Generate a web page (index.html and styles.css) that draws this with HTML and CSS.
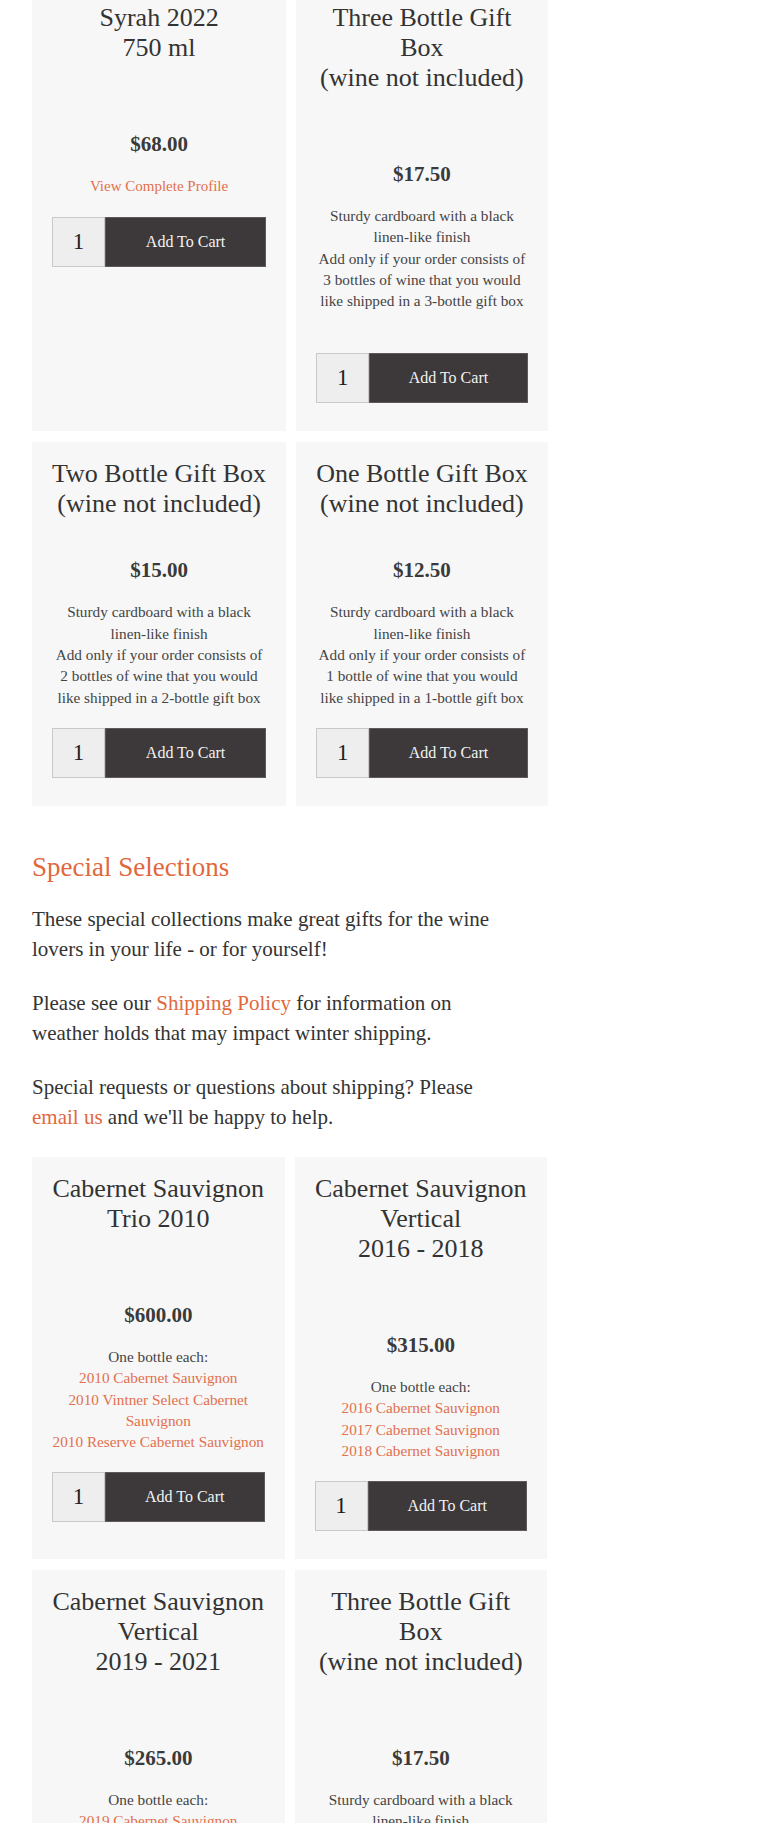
FILE: index.html
```html
<!DOCTYPE html>
<html lang="en">
<head>
<meta charset="utf-8">
<title>Wine Shop</title>
<link rel="stylesheet" href="styles.css">
</head>
<body>
<main class="page">
  <section class="grid">
    <article class="card">
      <h3 class="card-title tall">Syrah 2022<br>750 ml</h3>
      <div class="price">$68.00</div>
      <div class="desc"><a href="#" class="link small">View Complete Profile</a></div>
      <div class="cart"><span class="qty">1</span><button class="add">Add To Cart</button></div>
    </article>
    <article class="card">
      <h3 class="card-title tall">Three Bottle Gift<br>Box<br>(wine not included)</h3>
      <div class="price">$17.50</div>
      <div class="desc extra">Sturdy cardboard with a black<br>linen-like finish<br>Add only if your order consists of<br>3 bottles of wine that you would<br>like shipped in a 3-bottle gift box</div>
      <div class="cart"><span class="qty">1</span><button class="add">Add To Cart</button></div>
    </article>
    <article class="card">
      <h3 class="card-title">Two Bottle Gift Box<br>(wine not included)</h3>
      <div class="price">$15.00</div>
      <div class="desc">Sturdy cardboard with a black<br>linen-like finish<br>Add only if your order consists of<br>2 bottles of wine that you would<br>like shipped in a 2-bottle gift box</div>
      <div class="cart"><span class="qty">1</span><button class="add">Add To Cart</button></div>
    </article>
    <article class="card">
      <h3 class="card-title">One Bottle Gift Box<br>(wine not included)</h3>
      <div class="price">$12.50</div>
      <div class="desc">Sturdy cardboard with a black<br>linen-like finish<br>Add only if your order consists of<br>1 bottle of wine that you would<br>like shipped in a 1-bottle gift box</div>
      <div class="cart"><span class="qty">1</span><button class="add">Add To Cart</button></div>
    </article>
  </section>

  <section class="intro">
    <h2 class="section-title">Special Selections</h2>
    <p>These special collections make great gifts for the wine<br>lovers in your life - or for yourself!</p>
    <p>Please see our <a href="#" class="link">Shipping Policy</a> for information on<br>weather holds that may impact winter shipping.</p>
    <p>Special requests or questions about shipping? Please<br><a href="#" class="link">email us</a> and we'll be happy to help.</p>
  </section>

  <section class="grid">
    <article class="card">
      <h3 class="card-title tall">Cabernet Sauvignon<br>Trio 2010</h3>
      <div class="price">$600.00</div>
      <div class="desc">One bottle each:<br><a href="#" class="link">2010 Cabernet Sauvignon</a><br><a href="#" class="link">2010 Vintner Select Cabernet<br>Sauvignon</a><br><a href="#" class="link">2010 Reserve Cabernet Sauvignon</a></div>
      <div class="cart"><span class="qty">1</span><button class="add">Add To Cart</button></div>
    </article>
    <article class="card">
      <h3 class="card-title tall">Cabernet Sauvignon<br>Vertical<br>2016 - 2018</h3>
      <div class="price">$315.00</div>
      <div class="desc">One bottle each:<br><a href="#" class="link">2016 Cabernet Sauvignon</a><br><a href="#" class="link">2017 Cabernet Sauvignon</a><br><a href="#" class="link">2018 Cabernet Sauvignon</a></div>
      <div class="cart"><span class="qty">1</span><button class="add">Add To Cart</button></div>
    </article>
    <article class="card">
      <h3 class="card-title tall">Cabernet Sauvignon<br>Vertical<br>2019 - 2021</h3>
      <div class="price">$265.00</div>
      <div class="desc">One bottle each:<br><a href="#" class="link">2019 Cabernet Sauvignon</a><br><a href="#" class="link">2020 Cabernet Sauvignon</a><br><a href="#" class="link">2021 Cabernet Sauvignon</a></div>
      <div class="cart"><span class="qty">1</span><button class="add">Add To Cart</button></div>
    </article>
    <article class="card">
      <h3 class="card-title tall">Three Bottle Gift<br>Box<br>(wine not included)</h3>
      <div class="price">$17.50</div>
      <div class="desc extra">Sturdy cardboard with a black<br>linen-like finish<br>Add only if your order consists of<br>3 bottles of wine that you would<br>like shipped in a 3-bottle gift box</div>
      <div class="cart"><span class="qty">1</span><button class="add">Add To Cart</button></div>
    </article>
  </section>
</main>
</body>
</html>
```

FILE: styles.css
```css
html, body {
  margin: 0;
  padding: 0;
  background: #ffffff;
}

body {
  font-family: "Liberation Serif", "Times New Roman", serif;
  color: #333333;
}

.page {
  width: 515px;
  margin: -14px 0 0 32px;
}

.grid {
  display: grid;
  grid-template-columns: 1fr 1fr;
  column-gap: 10px;
  row-gap: 11px;
}

.card {
  background: #f7f7f7;
  padding: 17px 20px 28px;
  text-align: center;
  display: flex;
  flex-direction: column;
  align-items: stretch;
}

.card-title {
  margin: 0;
  font-size: 26px;
  line-height: 30px;
  font-weight: normal;
  color: #333333;
  white-space: nowrap;
}

.card-title.tall {
  padding-bottom: 30px;
}

.price {
  margin-top: 39px;
  font-size: 21px;
  line-height: 24px;
  font-weight: bold;
  color: #3a3a3a;
}

.desc {
  margin-top: 19px;
  font-size: 15.25px;
  line-height: 21.3px;
  color: #444444;
  white-space: nowrap;
}

.desc.extra {
  margin-bottom: 22px;
}

.link {
  color: #e2673d;
  text-decoration: none;
}

.desc .link {
  color: #e2704e;
}

.link.small {
  font-size: 15px;
}

.cart {
  margin-top: 20px;
  display: flex;
  height: 50px;
}

.qty {
  box-sizing: border-box;
  width: 53px;
  height: 50px;
  flex: 0 0 53px;
  background: #eeeeee;
  border: 1px solid #c9c9c9;
  display: flex;
  align-items: center;
  justify-content: center;
  font-size: 23px;
  color: #222222;
}

.add {
  flex: 1 1 auto;
  box-sizing: border-box;
  height: 50px;
  background: #3d393a;
  border: 1px solid #5e5a5b;
  color: #f2f2f2;
  font-family: "Liberation Serif", "Times New Roman", serif;
  font-size: 16px;
  padding: 0;
  cursor: pointer;
}

.intro {
  margin: 45px 0 25px;
}

.section-title {
  margin: 0;
  font-size: 27px;
  line-height: 32px;
  font-weight: normal;
  color: #e2673d;
}

.intro p {
  margin: 21px 0 0;
  font-size: 21px;
  line-height: 30px;
  color: #333333;
}

.intro p + p {
  margin-top: 24px;
}
```
